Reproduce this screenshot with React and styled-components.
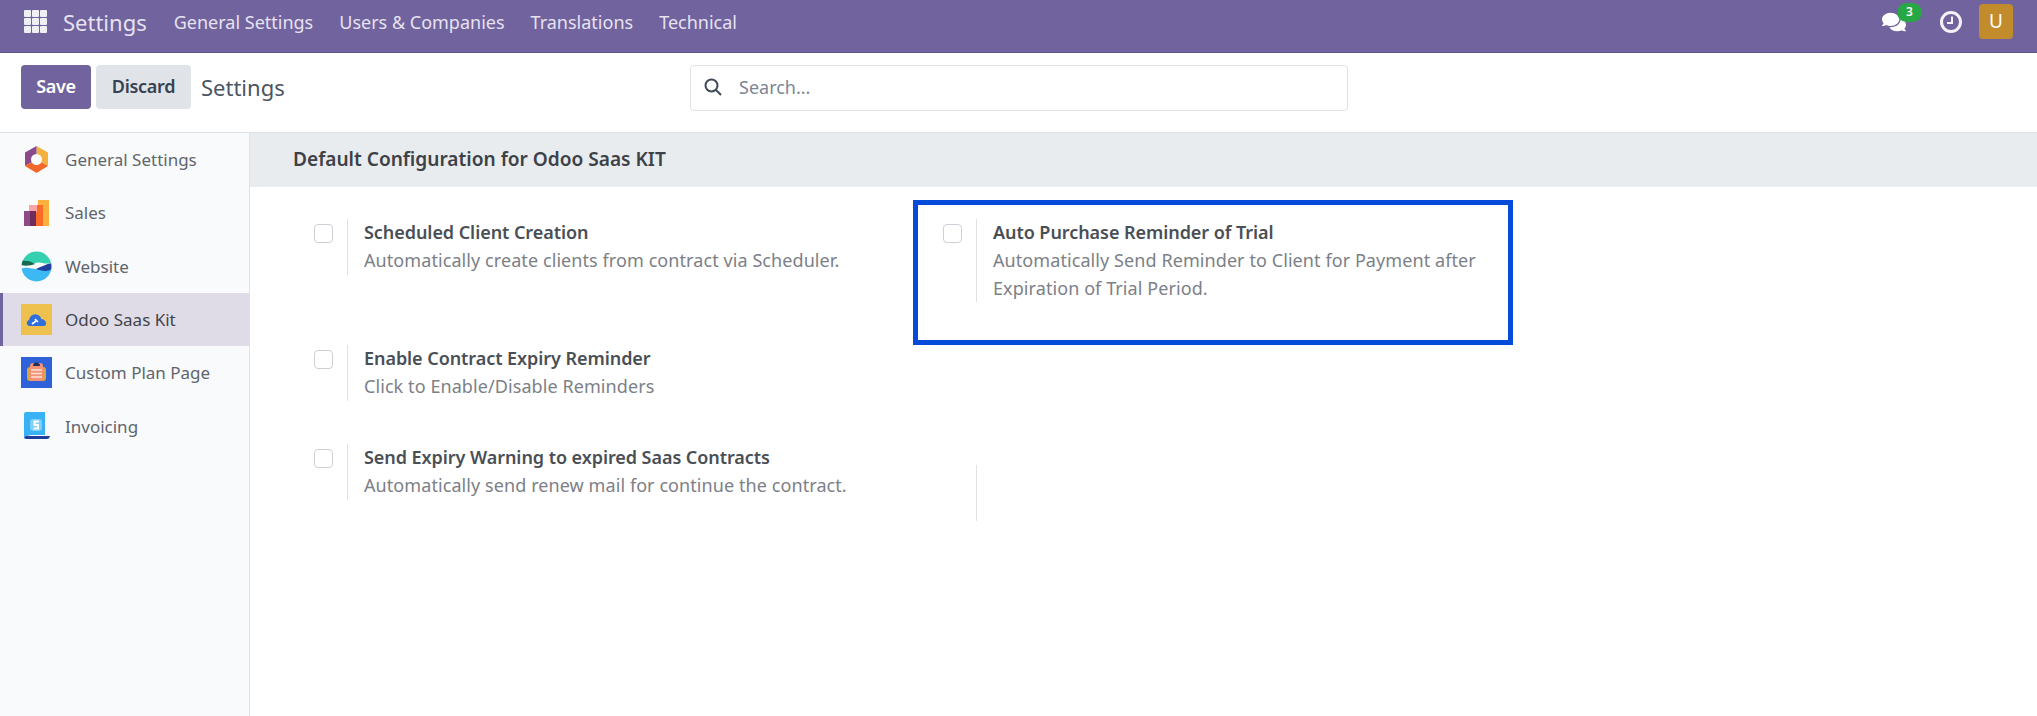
import React from 'react'
import styled, { createGlobalStyle } from 'styled-components'
import { FaComments } from 'react-icons/fa'

const GlobalStyle = createGlobalStyle`
  html, body { margin: 0; padding: 0; height: 100%; background: #fff; }
  body { font-family: "Noto Sans", "Open Sans", sans-serif; overflow: hidden; }
  #root { height: 100%; }
`

const Page = styled.div`
  display: flex;
  flex-direction: column;
  width: 2037px;
  height: 716px;
`

const Navbar = styled.header`
  display: flex;
  align-items: center;
  height: 53px;
  box-sizing: border-box;
  padding: 0 24px 9px;
  background: #71639e;
  border-bottom: 1px solid #5f5387;
  color: #e6e2f0;
  flex: none;
`

const AppsGrid = styled.div`
  display: grid;
  grid-template-columns: repeat(3, 7px);
  grid-auto-rows: 7px;
  gap: 1px;
  margin-right: 16px;
  div { background: #f1eff6; border-radius: 1px; }
`

const Brand = styled.span`
  font-size: 22px;
  margin-right: 27px;
`

const NavItem = styled.span`
  font-size: 18px;
  margin-right: 26px;
`

const NavRight = styled.div`
  display: flex;
  align-items: center;
  margin-left: auto;
`

const ChatWrap = styled.div`
  position: relative;
  width: 24px;
  height: 24px;
  margin-right: 34px;
  color: #fff;
  display: flex;
  align-items: center;
`

const Badge = styled.span`
  position: absolute;
  left: 15px;
  top: -7px;
  width: 25px;
  height: 19px;
  border-radius: 10px;
  background: #28a745;
  color: #fff;
  font-size: 12px;
  font-weight: 600;
  line-height: 18px;
  text-align: center;
`

const Avatar = styled.div`
  width: 34px;
  height: 35px;
  margin-left: 17px;
  border-radius: 4px;
  background: #c28b2c;
  color: #fff;
  font-size: 19px;
  line-height: 35px;
  text-align: center;
`

const ControlPanel = styled.div`
  display: grid;
  grid-template-columns: 669px 658px;
  align-items: start;
  height: 80px;
  padding: 12px 0 0 21px;
  box-sizing: border-box;
  border-bottom: 1px solid #dee2e6;
  flex: none;
`

const Actions = styled.div`
  display: flex;
  align-items: center;
  height: 44px;
`

const Button = styled.button`
  height: 44px;
  padding: 0 0 2px;
  width: ${p => p.$w}px;
  margin-right: 5px;
  border: 0;
  border-radius: 4px;
  font: 600 18px "Noto Sans", sans-serif;
  letter-spacing: -0.3px;
  color: ${p => (p.$primary ? '#fff' : '#374151')};
  background: ${p => (p.$primary ? '#71639e' : '#e0e3e8')};
`

const Crumb = styled.span`
  margin-left: 5px;
  font-size: 22px;
  color: #4b5563;
`

const SearchBox = styled.div`
  display: flex;
  align-items: center;
  height: 46px;
  box-sizing: border-box;
  border: 1px solid #dfe3e8;
  border-radius: 4px;
  padding: 0 0 2px 13px;
  color: #7b8794;
  font-size: 18px;
  svg { margin-right: 17px; color: #3f4a57; }
`

const Body = styled.div`
  display: flex;
  flex: 1;
  min-height: 0;
`

const Sidebar = styled.nav`
  width: 249px;
  flex: none;
  background: #f9fafb;
  border-right: 1px solid #dee2e6;
`

const SideItem = styled.div`
  display: flex;
  align-items: center;
  height: 53.3px;
  padding-left: ${p => (p.$active ? '18px' : '21px')};
  box-sizing: border-box;
  font-size: 17px;
  color: ${p => (p.$active ? '#3f444a' : '#5f656c')};
  background: ${p => (p.$active ? '#dfdce8' : 'transparent')};
  border-left: ${p => (p.$active ? '3px solid #71639e' : '0')};
  svg { width: 31px; height: 31px; margin-right: 13px; flex: none; }
`

const Main = styled.main`
  flex: 1;
  min-width: 0;
`

const SectionHead = styled.h2`
  margin: 0;
  height: 54px;
  padding-left: 43px;
  background: #e9ecef;
  color: #3d4248;
  font-size: 19.1px;
  font-weight: 600;
  line-height: 52px;
`

const SettingsGrid = styled.div`
  display: grid;
  grid-template-columns: 629px 629px;
  row-gap: 43px;
  padding: 32px 0 0 64px;
  align-items: start;
`

const Setting = styled.div`
  position: relative;
  display: flex;
  align-items: flex-start;
  margin-top: ${p => p.$offset || 0}px;
`

const CheckSlot = styled.div`
  width: 33px;
  flex: none;
  padding-top: 5px;
`

const Check = styled.span`
  display: block;
  width: 17px;
  height: 17px;
  border: 1px solid #ccd0d5;
  border-radius: 4px;
  background: #fff;
`

const SettingBody = styled.div`
  border-left: 1px solid #dee2e6;
  padding-left: 16px;
  width: 520px;
  min-height: 56px;
  line-height: 28px;
`

const Title = styled.div`
  font-size: 18px;
  font-weight: 600;
  letter-spacing: -0.06px;
  margin-top: -1px;
  color: #4a4f55;
`

const Hint = styled.div`
  font-size: 18px;
  letter-spacing: 0.08px;
  color: #7c8087;
`

const Highlight = styled.div`
  position: absolute;
  left: -30px;
  top: -19px;
  width: 600px;
  height: 145px;
  box-sizing: border-box;
  border: 5px solid #044bd9;
`

const GeneralIcon = () => (
  <svg viewBox="0 0 31 31">
    <path d="M15.5 2 L27 8.5 V22 L15.5 15.5Z" fill="#f5b13d" />
    <path d="M15.5 2 L4 8.5 V22 L15.5 15.5Z" fill="#8b4a8b" />
    <path d="M4 22 L15.5 15.5 L27 22 L15.5 29Z" fill="#f2682a" />
    <circle cx="15.5" cy="15.5" r="5.5" fill="#f9fafb" />
  </svg>
)

const SalesIcon = () => (
  <svg viewBox="0 0 31 31">
    <rect x="17" y="3" width="11" height="26" fill="#fbb13c" />
    <rect x="11" y="8" width="11" height="21" fill="#fb6b25" />
    <rect x="8" y="8" width="8" height="7" fill="#f8a5a5" />
    <rect x="3" y="14" width="12" height="15" fill="#8d4a86" />
    <rect x="9" y="14" width="6" height="15" fill="#6f2c5f" />
  </svg>
)

const WebsiteIcon = () => (
  <svg viewBox="0 0 31 31">
    <defs>
      <clipPath id="site-disc"><circle cx="15.5" cy="15.5" r="15" /></clipPath>
    </defs>
    <g clipPath="url(#site-disc)">
      <path d="M0 0 H31 V11 C25 15 20 10 15 12 C10 14 5 9 0 11Z" fill="#35d0b0" />
      <path d="M0 10 C5 9 10 10 14 13 C9 15 4 15 0 14Z" fill="#17694f" />
      <path d="M0 18 C7 15 12 19 17 18 C22 17 26 17 31 17 V31 H0Z" fill="#3cb9f5" />
      <path d="M15 18 C20 16 25 13 31 12 V18 C27 21 20 20 15 18Z" fill="#213f9c" />
    </g>
  </svg>
)

const SaasIcon = () => (
  <svg viewBox="0 0 31 31">
    <rect width="31" height="31" fill="#eec14e" />
    <path d="M9 22 C5 22 5 17 8 16 C9 11 14 9 17 11 C19 12 20 13 20 15 C25 15 27 21 23 22Z" fill="#2f6fdc" />
    <path d="M11 20 L15 17 M14 15 L17 18" stroke="#fff" strokeWidth="1.6" />
  </svg>
)

const PlanIcon = () => (
  <svg viewBox="0 0 31 31">
    <rect width="31" height="31" fill="#2f62d8" />
    <rect x="6" y="10" width="19" height="14" rx="3" fill="#d9a441" />
    <rect x="9" y="6" width="13" height="18" rx="3" fill="#f39277" />
    <path d="M10 13 H21 M10 16.5 H21 M10 20 H21" stroke="#fde2d6" strokeWidth="1.5" />
    <path d="M12 9 A3.5 3.5 0 0 1 19 9Z" fill="#243056" />
  </svg>
)

const InvoiceIcon = () => (
  <svg viewBox="0 0 31 31">
    <path d="M5 1 H24 V24 H8 C6 24 3 27 3 27 V3 C3 2 4 1 5 1Z" fill="#38b1f5" />
    <path d="M3 27 C5 24 7 25 10 25 H29 C28 28 27 28 25 28 H8 C6 28 4 28 3 27Z" fill="#1d3f9c" />
    <rect x="9" y="8" width="12" height="12" rx="3" fill="#7bd0fb" />
    <path d="M18 10.5 H13.5 V14 H17 V17.5 H12.5" fill="none" stroke="#fff" strokeWidth="2" />
  </svg>
)

const ClockIcon = () => (
  <svg width="22" height="22" viewBox="0 0 22 22" fill="none" stroke="#f4f2f8">
    <circle cx="11" cy="11" r="9.5" strokeWidth="3" />
    <path d="M12 5.5 V12 H7" strokeWidth="2" />
  </svg>
)

const SearchIcon = () => (
  <svg width="18" height="18" viewBox="0 0 18 18" fill="none" stroke="currentColor" strokeWidth="2">
    <circle cx="7.5" cy="7.5" r="6" />
    <path d="M12 12 L17 17" />
  </svg>
)

const sideItems = [
  { label: 'General Settings', Icon: GeneralIcon },
  { label: 'Sales', Icon: SalesIcon },
  { label: 'Website', Icon: WebsiteIcon },
  { label: 'Odoo Saas Kit', Icon: SaasIcon, active: true },
  { label: 'Custom Plan Page', Icon: PlanIcon },
  { label: 'Invoicing', Icon: InvoiceIcon },
]

const SettingRow = ({ title, hint, highlight }) => (
  <Setting>
    {highlight && <Highlight />}
    <CheckSlot><Check /></CheckSlot>
    <SettingBody>
      <Title>{title}</Title>
      <Hint>{hint}</Hint>
    </SettingBody>
  </Setting>
)

export default function App() {
  return (
    <Page>
      <GlobalStyle />
      <Navbar>
        <AppsGrid>
          {Array.from({ length: 9 }, (_, i) => <div key={i} />)}
        </AppsGrid>
        <Brand>Settings</Brand>
        <NavItem>General Settings</NavItem>
        <NavItem>Users &amp; Companies</NavItem>
        <NavItem>Translations</NavItem>
        <NavItem>Technical</NavItem>
        <NavRight>
          <ChatWrap>
            <FaComments size={24} />
            <Badge>3</Badge>
          </ChatWrap>
          <ClockIcon />
          <Avatar>U</Avatar>
        </NavRight>
      </Navbar>
      <ControlPanel>
        <Actions>
          <Button $primary $w={70}>Save</Button>
          <Button $w={95}>Discard</Button>
          <Crumb>Settings</Crumb>
        </Actions>
        <SearchBox>
          <SearchIcon />
          Search...
        </SearchBox>
      </ControlPanel>
      <Body>
        <Sidebar>
          {sideItems.map(({ label, Icon, active }) => (
            <SideItem key={label} $active={active}>
              <Icon />
              {label}
            </SideItem>
          ))}
        </Sidebar>
        <Main>
          <SectionHead>Default Configuration for Odoo Saas KIT</SectionHead>
          <SettingsGrid>
            <SettingRow
              title="Scheduled Client Creation"
              hint="Automatically create clients from contract via Scheduler."
            />
            <SettingRow
              highlight
              title="Auto Purchase Reminder of Trial"
              hint="Automatically Send Reminder to Client for Payment after Expiration of Trial Period."
            />
            <SettingRow
              title="Enable Contract Expiry Reminder"
              hint="Click to Enable/Disable Reminders"
            />
            <div />
            <SettingRow
              title="Send Expiry Warning to expired Saas Contracts"
              hint="Automatically send renew mail for continue the contract."
            />
            <Setting $offset={21}>
              <CheckSlot />
              <SettingBody />
            </Setting>
          </SettingsGrid>
        </Main>
      </Body>
    </Page>
  )
}
